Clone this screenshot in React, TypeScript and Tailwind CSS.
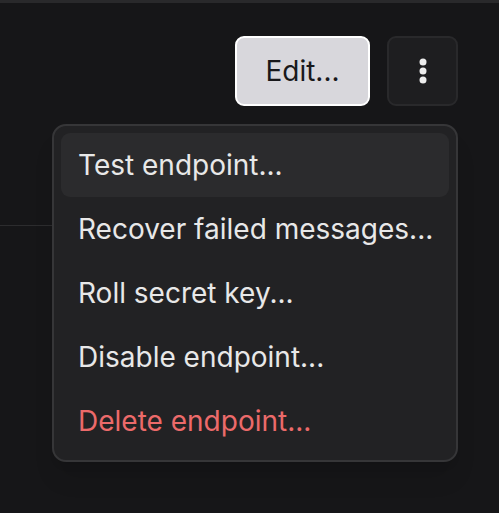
import React from 'react';

const items = [
    { label: 'Test endpoint...', active: true },
    { label: 'Recover failed messages...' },
    { label: 'Roll secret key...' },
    { label: 'Disable endpoint...' },
    { label: 'Delete endpoint...', danger: true },
];

export default function App() {
    return (
        <div
            className="relative w-[499px] h-[513px] overflow-hidden bg-[#161618] border-t-[3px] border-[#29292b]"
            style={{ fontFamily: 'Inter, "Noto Sans", sans-serif' }}
        >
            {/* card edge behind the menu */}
            <div className="absolute left-0 top-[222px] w-[120px] border-t border-[#2c2c2e]" />

            <div className="flex justify-end gap-[17px] pt-[33px] pr-[41px]">
                <button className="h-[70px] w-[135px] rounded-[9px] border-2 border-white bg-[#d8d7dc] text-[28px] text-[#18181b]">
                    Edit...
                </button>
                <button className="flex h-[70px] w-[71px] items-center justify-center rounded-[9px] border-2 border-[#29292b] bg-[#1e1e20]">
                    <svg width="8" height="26" viewBox="0 0 8 26" fill="#ededed">
                        <circle cx="4" cy="4" r="3.5" />
                        <circle cx="4" cy="13" r="3.5" />
                        <circle cx="4" cy="22" r="3.5" />
                    </svg>
                </button>
            </div>

            <div className="absolute left-[52px] top-[121px] w-[406px] rounded-[14px] border-2 border-[#363638] bg-[#222224] p-[7px] shadow-xl">
                {items.map((item) => (
                    <div
                        key={item.label}
                        className={`flex h-[64px] items-center whitespace-nowrap rounded-[9px] px-[17px] text-[28px] ${
                            item.active ? 'bg-[#2b2b2d]' : ''
                        } ${item.danger ? 'text-[#ec6a6a]' : 'text-[#e8e8e8]'}`}
                    >
                        {item.label}
                    </div>
                ))}
            </div>
        </div>
    );
}
